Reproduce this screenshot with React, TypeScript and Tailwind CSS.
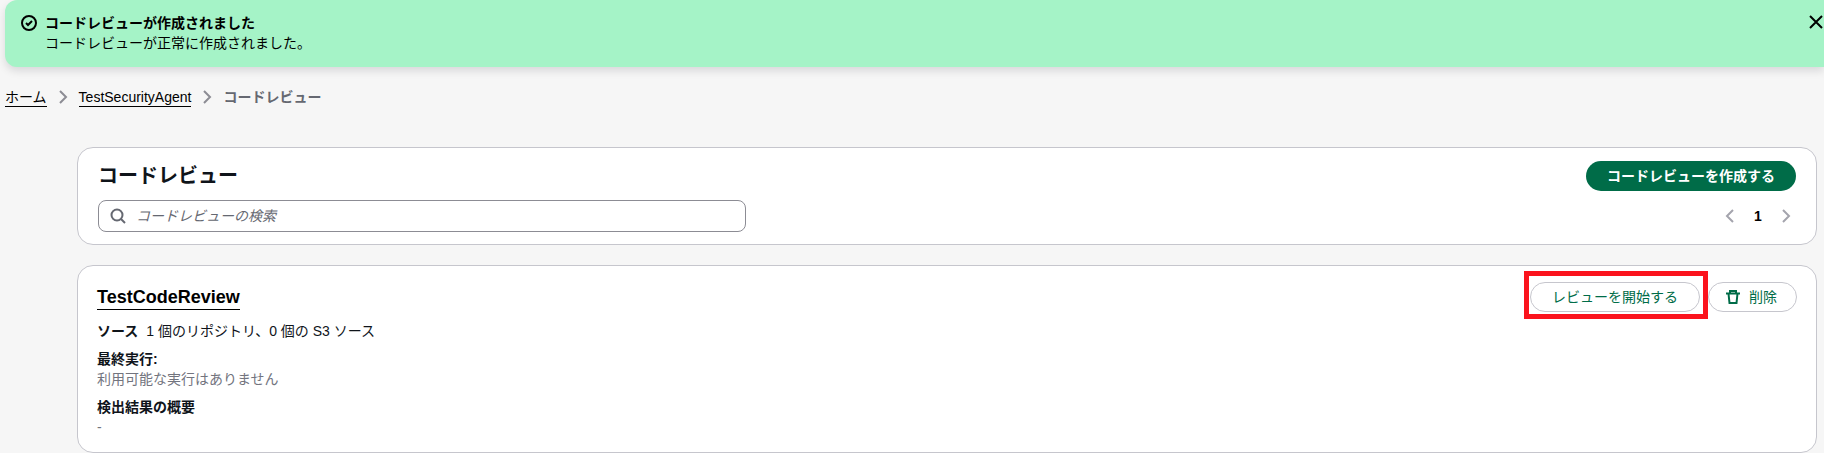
import type { ReactNode } from "react";

type IconProps = {
  className?: string;
  children: ReactNode;
};

function Icon({ className = "", children }: IconProps) {
  return (
    <svg
      viewBox="0 0 16 16"
      fill="none"
      stroke="currentColor"
      strokeWidth="2"
      className={`size-4 shrink-0 ${className}`}
      aria-hidden="true"
    >
      {children}
    </svg>
  );
}

function ChevronRight() {
  return (
    <Icon className="text-[#8c8c94]">
      <path d="M5 2l6 6-6 6" />
    </Icon>
  );
}

function Flashbar() {
  return (
    <div
      role="status"
      className="ml-[5px] flex items-start gap-2 rounded-l-xl bg-[#a5f3c7] pb-[14px] pl-4 pt-[13px] text-black shadow-[0_4px_8px_rgba(0,7,22,0.12)]"
    >
      <div className="flex h-5 items-center">
        <Icon>
          <circle cx="8" cy="8" r="7" />
          <path d="M5 8l2 2 4-4" />
        </Icon>
      </div>
      <div className="flex-1">
        <p className="font-bold">コードレビューが作成されました</p>
        <p>コードレビューが正常に作成されました。</p>
      </div>
      <button type="button" aria-label="閉じる" className="flex h-[18px] items-center">
        <Icon>
          <path d="M2 2l12 12M14 2L2 14" />
        </Icon>
      </button>
    </div>
  );
}

function Breadcrumbs() {
  return (
    <nav aria-label="パンくずリスト" className="ml-[5px] mt-5 flex h-5 items-center gap-2">
      <a href="#home" className="h-5 border-b border-black text-black">
        ホーム
      </a>
      <ChevronRight />
      <a href="#agent" className="h-5 border-b border-black text-black">
        TestSecurityAgent
      </a>
      <ChevronRight />
      <span aria-current="page" className="font-bold text-[#656871]">
        コードレビュー
      </span>
    </nav>
  );
}

function ListHeader() {
  return (
    <section className="rounded-2xl border border-[#c6c6cd] bg-white px-5 pb-3 pt-[13px]">
      <div className="flex items-center justify-between">
        <h1 className="text-xl font-bold leading-6">コードレビュー</h1>
        <button
          type="button"
          className="h-[30px] rounded-full bg-[#006c48] px-[21px] font-bold text-white"
        >
          コードレビューを作成する
        </button>
      </div>

      <div className="mt-[9px] flex items-center justify-between">
        <label className="flex h-8 w-full max-w-[648px] items-center gap-[10px] rounded-lg border border-[#8c8c94] px-[11px] text-[#656871]">
          <Icon>
            <circle cx="7" cy="7" r="5.5" />
            <path d="M11 11l4 4" />
          </Icon>
          <input
            type="search"
            aria-label="コードレビューの検索"
            placeholder="コードレビューの検索"
            className="min-w-0 flex-1 bg-transparent outline-none placeholder:italic placeholder:text-[#656871]"
          />
        </label>

        <div className="mr-[2px] flex items-center text-[#a4a4ad]">
          <button type="button" aria-label="前のページ">
            <Icon>
              <path d="M11 2L5 8l6 6" />
            </Icon>
          </button>
          <button type="button" className="w-10 text-center font-bold text-black">
            1
          </button>
          <button type="button" aria-label="次のページ">
            <Icon>
              <path d="M5 2l6 6-6 6" />
            </Icon>
          </button>
        </div>
      </div>
    </section>
  );
}

function ReviewCard() {
  return (
    <section className="rounded-2xl border border-[#c6c6cd] bg-white px-[19px] pb-[15px] pt-4">
      <div className="flex items-center justify-between">
        <h2 className="text-lg font-bold leading-6">
          <a href="#review" className="inline-block border-b border-black text-black">
            TestCodeReview
          </a>
        </h2>
        <div className="flex gap-2 text-[#006c48]">
          <div className="relative">
            <button
              type="button"
              className="h-[30px] rounded-full border border-[#c6c6cd] px-[21px]"
            >
              レビューを開始する
            </button>
            <div className="pointer-events-none absolute -bottom-[7px] -left-[6px] -right-[8px] -top-[11px] border-[5px] border-[#fb131d]" />
          </div>
          <button
            type="button"
            className="flex h-[30px] items-center gap-2 rounded-full border border-[#c6c6cd] pl-4 pr-[19px]"
          >
            <Icon>
              <path d="M1 4.5h14M5 4.5V2h6v2.5M3.5 4.5L4.5 14h7l1-9.5" />
            </Icon>
            削除
          </button>
        </div>
      </div>

      <dl className="mt-[9px]">
        <div className="flex gap-2">
          <dt className="font-bold">ソース</dt>
          <dd>1 個のリポジトリ、0 個の S3 ソース</dd>
        </div>
        <div className="mt-2">
          <dt className="font-bold">最終実行:</dt>
          <dd className="text-[#72747e]">利用可能な実行はありません</dd>
        </div>
        <div className="mt-2">
          <dt className="font-bold">検出結果の概要</dt>
          <dd className="text-[#72747e]">-</dd>
        </div>
      </dl>
    </section>
  );
}

export default function App() {
  return (
    <div
      lang="ja"
      className="min-h-screen overflow-x-hidden bg-[#f6f6f6] font-['Liberation_Sans','Noto_Sans_CJK_JP',sans-serif] text-sm leading-5 text-[#0f141a]"
    >
      <Flashbar />
      <Breadcrumbs />
      <main className="ml-[77px] mr-[7px] mt-10 flex flex-col gap-5">
        <ListHeader />
        <ReviewCard />
      </main>
    </div>
  );
}
